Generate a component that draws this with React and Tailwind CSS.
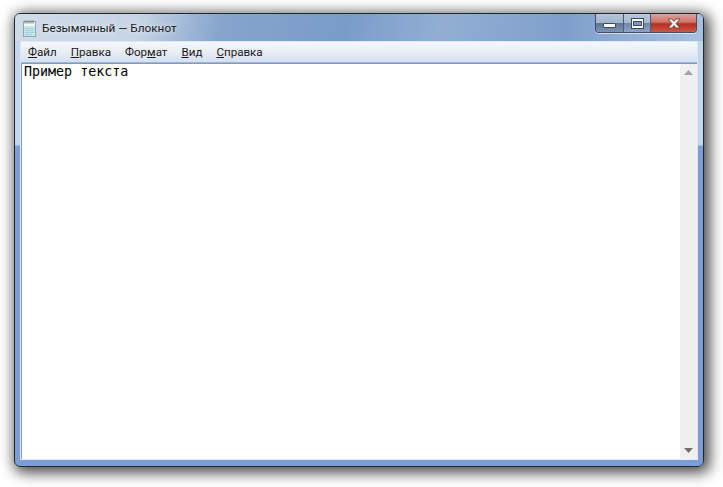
import React from 'react'

const MENU = [
    { key: 'file', before: '', mark: 'Ф', after: 'айл' },
    { key: 'edit', before: '', mark: 'П', after: 'равка' },
    { key: 'format', before: 'Фор', mark: 'м', after: 'ат' },
    { key: 'view', before: '', mark: 'В', after: 'ид' },
    { key: 'help', before: '', mark: 'С', after: 'правка' }
]

function NotepadIcon() {
    return (
        <svg width="15" height="17" viewBox="0 0 15 17" className="shrink-0">
            <rect x="1.5" y="1.5" width="12" height="15" fill="#c9e6ec" stroke="#8fa6ae" />
            <rect x="2" y="2" width="11" height="4" fill="#f6f8f4" />
            <path d="M3 8.5h9M3 10.5h9M3 12.5h9M3 14.5h7" stroke="#a3d0dc" />
            <path d="M3 0.5v3M5 0.5v3M7 0.5v3M9 0.5v3M11 0.5v3" stroke="#6c7a80" />
        </svg>
    )
}

function WindowButtons() {
    return (
        <div className="flex h-[19px] w-[102px] shrink-0 overflow-hidden rounded-b-[4px] border border-t-0 border-[#3f4f66] shadow-[0_1px_0_rgba(255,255,255,0.6)]">
            <div className="flex w-[28px] items-end justify-center border-r border-[#4c5d78] bg-[linear-gradient(180deg,#b4c4da_0%,#a3b5ce_48%,#5f7797_52%,#7d94b4_100%)] pb-[4px]">
                <div className="h-[5px] w-[13px] rounded-[1px] border border-[#3c4a5e] bg-white" />
            </div>
            <div className="flex w-[27px] items-center justify-center border-r border-[#4c5d78] bg-[linear-gradient(180deg,#b8c8dd_0%,#a7b9d2_48%,#6f86a6_52%,#8ea4c2_100%)]">
                <div className="flex h-[11px] w-[13px] items-center justify-center border border-[#3c4a5e] bg-white">
                    <div className="h-[5px] w-[9px] border border-[#3c4a5e] bg-[#7f98bb]" />
                </div>
            </div>
            <div className="flex flex-1 items-center justify-center bg-[linear-gradient(180deg,#dba39c_0%,#d0746a_45%,#b52f1e_55%,#c9584a_100%)]">
                <svg width="16" height="13" viewBox="0 0 16 13">
                    <path
                        d="M2 2h4l2 2.5L10 2h4l-4 4.5 4 4.5h-4L8 8.5 6 11H2l4-4.5z"
                        fill="#f4f6f8"
                        stroke="#5a3a3a"
                        strokeWidth="0.8"
                    />
                </svg>
            </div>
        </div>
    )
}

function Scrollbar() {
    return (
        <div className="flex w-[17px] shrink-0 flex-col items-center justify-between bg-[#f0f0f0] py-[6px]">
            <svg width="9" height="5" viewBox="0 0 9 5">
                <path d="M4.5 0L9 5H0z" fill="#a3a3a3" />
            </svg>
            <svg width="9" height="5" viewBox="0 0 9 5">
                <path d="M0 0h9L4.5 5z" fill="#6f6f6f" />
            </svg>
        </div>
    )
}

export default function App() {
    return (
        <div className="h-[487px] w-[723px] overflow-hidden bg-white pl-[14px] pt-[13px]">
            <div className="flex h-[454px] w-[690px] flex-col rounded-[6px] border border-[#23282e] bg-[linear-gradient(180deg,#c3d6ee_0px,#c3d6ee_131px,#7c9ed4_132px,#7c9ed4_100%)] px-[5px] pb-[6px] shadow-[3px_3px_14px_3px_rgba(0,0,0,0.7)]">
                <div className="-mx-[5px] flex h-[27px] shrink-0 items-start justify-between rounded-t-[5px] bg-[linear-gradient(100deg,#d0dbe8_0%,#c6d4e6_18%,#86a4cc_30%,#7b9cc9_48%,#92aed4_62%,#7f9fcb_80%,#a9c1de_100%)] pl-[7px] pr-[6px] font-['Roboto',sans-serif]">
                    <div className="flex items-center gap-[5px] pt-[4px] text-[11.75px] leading-[20px] text-[#1c1c1c] [text-shadow:0_0_6px_rgba(255,255,255,0.9)]">
                        <NotepadIcon />
                        <span>Безымянный — Блокнот</span>
                    </div>
                    <WindowButtons />
                </div>

                <div className="flex min-h-0 flex-1 flex-col border border-[#dce8f5] border-b-[#e4eefa]">
                    <div className="flex h-[21px] shrink-0 items-center gap-[14px] border-b border-[#9cb5d8] bg-[linear-gradient(180deg,#f5f7fb_0%,#e8edf6_50%,#d6dff0_100%)] pl-[7px] pt-[1px] font-['Roboto',sans-serif] text-[11.6px] text-[#1a1a1a]">
                        {MENU.map((m) => (
                            <span key={m.key}>
                                {m.before}
                                <span className="underline">{m.mark}</span>
                                {m.after}
                            </span>
                        ))}
                    </div>

                    <div className="flex min-h-0 flex-1 border-l border-t border-[#7f9db9] bg-white">
                        <div className="flex-1 pl-[2px] font-['DejaVu_Sans_Mono',monospace] text-[13.33px] leading-[15px] text-black">
                            Пример текста
                        </div>
                        <Scrollbar />
                    </div>
                </div>
            </div>
        </div>
    )
}
